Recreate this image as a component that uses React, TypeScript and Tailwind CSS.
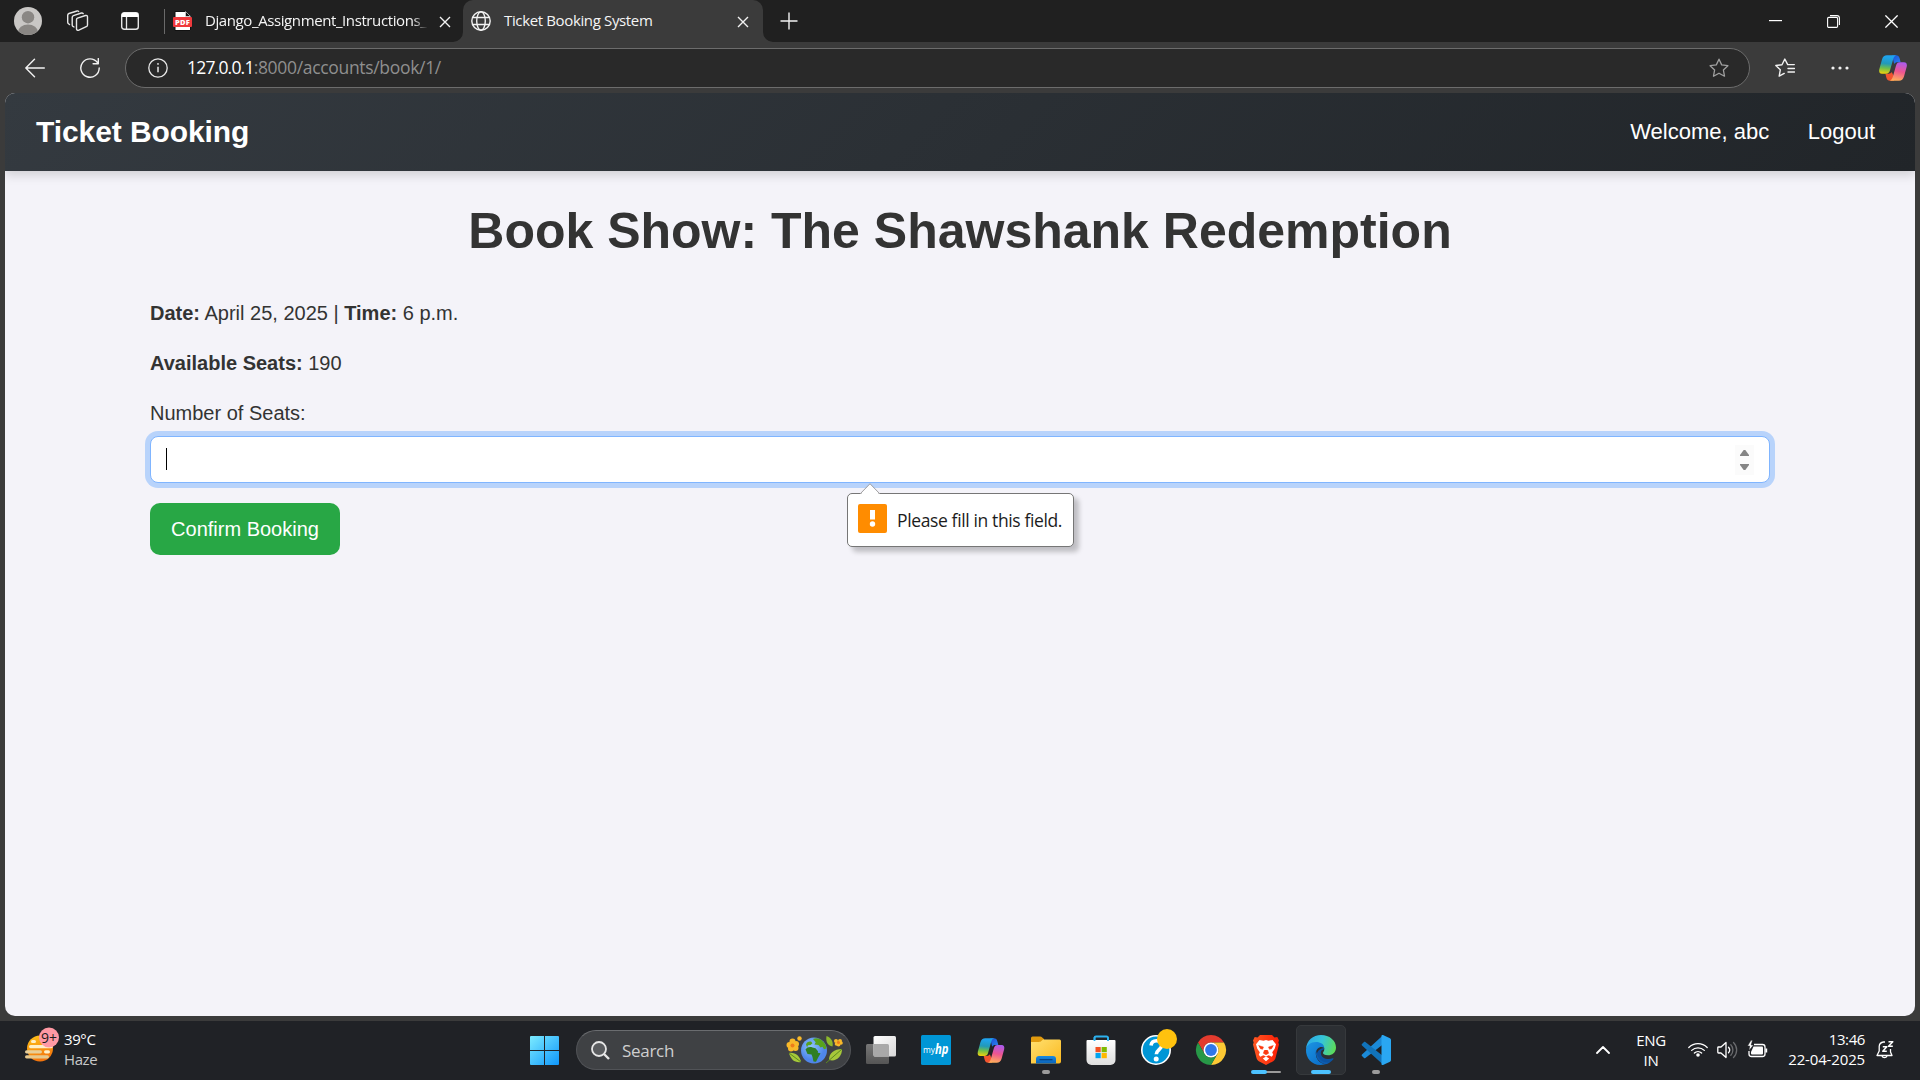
import React from "react";

const UI = "font-['Open_Sans','Noto_Sans',sans-serif]";

function Copilot({ className, id }: { className: string; id: string }) {
  return (
    <svg className={className} viewBox="0 0 28 26" fill="none">
      <defs>
        <linearGradient id={id + "a"} x1="8" y1="0" x2="6" y2="19" gradientUnits="userSpaceOnUse">
          <stop offset="0.1" stopColor="#1fa3ec" />
          <stop offset="0.45" stopColor="#2299b8" />
          <stop offset="0.7" stopColor="#6fbf4a" />
          <stop offset="1" stopColor="#f5d20a" />
        </linearGradient>
        <linearGradient id={id + "b"} x1="22" y1="7" x2="18" y2="26" gradientUnits="userSpaceOnUse">
          <stop offset="0" stopColor="#a95bf0" />
          <stop offset="0.5" stopColor="#ee5590" />
          <stop offset="1" stopColor="#ffb05a" />
        </linearGradient>
        <linearGradient id={id + "c"} x1="14" y1="0" x2="22" y2="8" gradientUnits="userSpaceOnUse">
          <stop offset="0" stopColor="#1b50d8" />
          <stop offset="1" stopColor="#2a84f0" />
        </linearGradient>
      </defs>
      <path d="M13 0.300h4c2 0 3 1 3.600 3l1 4h-3.200c-1.500 0-2.500.5-3.200 1.700L14 4z" fill={"url(#" + id + "c)"} />
      <path d="M15 25.700h-4c-2 0-3-1-3.600-3l-1-4h3.200c1.500 0 2.500-.5 3.200-1.700L15 22z" fill="#f2542f" />
      <path d="M8 0.300h9.500c-1.800.4-2.800 2-3.400 4.200l-3 10.500c-.8 2.700-1.800 3.700-4.100 3.700H3c-2.400 0-3.300-1.800-2.700-4.500L3 4.500C3.800 1.700 5.500.3 8 .3z" fill={"url(#" + id + "a)"} />
      <path d="M20 25.700h-9.500c1.800-.4 2.800-2 3.400-4.200l3-10.500c.8-2.700 1.800-3.700 4.100-3.700H25c2.400 0 3.300 1.800 2.700 4.500L25 21.500c-.8 2.800-2.500 4.200-5 4.200z" fill={"url(#" + id + "b)"} />
    </svg>
  );
}

function CloseIcon({ className }: { className: string }) {
  return (
    <svg className={className} viewBox="0 0 12 12" stroke="#f2f2f2" strokeWidth="1.400">
      <path d="M1 1l10 10M11 1L1 11" />
    </svg>
  );
}

function TabStrip() {
  return (
    <div className="flex h-[42px] items-center bg-[#202020]">
      <svg className="ml-[14px] size-7 shrink-0" viewBox="0 0 28 28">
        <clipPath id="av"><circle cx="14" cy="14" r="14" /></clipPath>
        <g clipPath="url(#av)">
          <rect width="28" height="28" fill="#c9c7c5" />
          <circle cx="14" cy="10.200" r="6.200" fill="#8a8784" />
          <ellipse cx="14" cy="25" rx="10" ry="7.500" fill="#8a8784" />
        </g>
      </svg>
      <svg className="ml-[24px] h-[22px] w-[24px] shrink-0" viewBox="0 0 24 22" fill="none" stroke="#e6e6e6" strokeWidth="1.400" strokeLinejoin="round" strokeLinecap="round">
        <path d="M11.500 8.200l8-2.700c1-.3 2 .3 2 1.400v8c0 .8-.4 1.400-1.200 1.700l-7.500 3.600c-1.200.5-2.300-.2-2.300-1.400v-9c0-.8.3-1.300 1-1.600z" />
        <path d="M8 17l-1-.6c-.6-.4-.8-.8-.8-1.500V7.500c0-.9.4-1.500 1.200-1.800l8-2.700c.8-.2 1.400 0 1.800.6" />
        <path d="M3.500 14.500l-1-.8c-.6-.4-.8-.8-.8-1.500V5.300c0-.9.4-1.500 1.200-1.800l8.200-2.500c.7-.2 1.200 0 1.500.4" />
      </svg>
      <svg className="ml-[31px] size-[18px] shrink-0" viewBox="0 0 18 18" fill="none">
        <rect x="0.700" y="0.700" width="16.600" height="16.600" rx="2.500" stroke="#e6e6e6" strokeWidth="1.400" />
        <path d="M0.700 3a2.300 2.300 0 0 1 2.300-2.300h12A2.300 2.300 0 0 1 17.300 3v2H.7z" fill="#fff" />
        <path d="M5.500 5v12" stroke="#e6e6e6" strokeWidth="1.300" />
      </svg>
      <div className="ml-[25px] h-[25px] w-px shrink-0 bg-[#6a6a6a]" />
      <svg className="ml-[8px] h-[20px] w-[19px] shrink-0" viewBox="0 0 19 20">
        <path d="M2 .5h10.500L17.500 5v14.500H2z" fill="#fff" stroke="#111" strokeWidth="1" />
        <path d="M12.500.5L17.500 5.500h-5z" fill="#111" stroke="#fff" strokeWidth=".5" />
        <rect y="6" width="19" height="10" rx="1" fill="#f0393c" />
        <text x="9.500" y="13.700" textAnchor="middle" fontSize="7.500" fontWeight="800" fontFamily="Open Sans" fill="#fff" letterSpacing=".3">PDF</text>
      </svg>
      <div className="mb-[2px] ml-[13px] w-[223px] shrink-0 overflow-hidden whitespace-nowrap text-[15px] leading-5 tracking-[-0.4px] text-[#f5f5f5] [mask-image:linear-gradient(to_right,#000_93%,transparent)]">Django_Assignment_Instructions_</div>
      <CloseIcon className="ml-[11px] mt-[2px] size-3 shrink-0" />
      <div className="relative ml-[12px] flex h-[42px] w-[300px] shrink-0 items-center rounded-t-[10px] bg-[#3b3b3b]">
        <svg className="absolute -left-[10px] bottom-0 size-[10px]" viewBox="0 0 10 10"><path d="M10 0v10H0A10 10 0 0 0 10 0z" fill="#3b3b3b" /></svg>
        <svg className="absolute -right-[10px] bottom-0 size-[10px]" viewBox="0 0 10 10"><path d="M0 0v10h10A10 10 0 0 1 0 0z" fill="#3b3b3b" /></svg>
        <svg className="ml-[8px] size-[20px]" viewBox="0 0 20 20" fill="none" stroke="#f2f2f2" strokeWidth="1.400">
          <circle cx="10" cy="10" r="9.200" />
          <ellipse cx="10" cy="10" rx="4.300" ry="9.200" />
          <path d="M1.700 6.500h16.600M1.700 13.500h16.600" />
        </svg>
        <span className="mb-[2px] ml-[13px] w-[150px] whitespace-nowrap text-[15px] leading-5 tracking-[-0.36px] text-[#f5f5f5]">Ticket Booking System</span>
        <CloseIcon className="ml-[83px] mt-[2px] size-3" />
      </div>
      <svg className="ml-[17px] size-[18px] shrink-0" viewBox="0 0 18 18" stroke="#f2f2f2" strokeWidth="1.400"><path d="M9 .5v17M.5 9h17" /></svg>
      <div className="ml-auto flex items-center pr-[22px]">
        <svg className="h-[2px] w-[13px]" viewBox="0 0 13 2"><path d="M0 .6h13" stroke="#fff" strokeWidth="1.200" /></svg>
        <svg className="ml-[45px] size-[13px]" viewBox="0 0 13 13" fill="none" stroke="#fff" strokeWidth="1.100">
          <rect x=".6" y="2.400" width="10" height="10" rx="1.200" />
          <path d="M3 .6h7c1.500 0 2.400.9 2.400 2.400v7" />
        </svg>
        <svg className="ml-[45px] size-[13px]" viewBox="0 0 13 13" stroke="#fff" strokeWidth="1.300"><path d="M.4.4l12.200 12.200M12.600.4L.4 12.600" /></svg>
      </div>
    </div>
  );
}

const STAR = "M10 1.200l2.700 5.700 6.200.8-4.500 4.300 1.100 6.200L10 15.200l-5.500 3 1.100-6.200L1.100 7.700l6.200-.8z";

function Toolbar() {
  return (
    <div className="flex h-[51px] items-center bg-[#3b3b3b]">
      <svg className="ml-[25px] size-5" viewBox="0 0 20 20" fill="none" stroke="#f2f2f2" strokeWidth="1.400" strokeLinecap="round" strokeLinejoin="round"><path d="M19.300 10H.8M9.500 1.300L.8 10l8.700 8.700" /></svg>
      <svg className="ml-[35px] size-5" viewBox="0 0 20 20" fill="none" stroke="#f2f2f2" strokeWidth="1.400" strokeLinecap="round" strokeLinejoin="round"><path d="M19.200 10a9.200 9.200 0 1 1-1.700-5.300M18.300.6v5.200h-5.200" /></svg>
      <div className="ml-[25px] flex h-10 w-[1625px] items-center rounded-full border border-[#6c6c6c] bg-[#292929]">
        <svg className="ml-[22px] size-5" viewBox="0 0 20 20" fill="none" stroke="#e8e8e8" strokeWidth="1.300"><circle cx="10" cy="10" r="9.200" /><path d="M10 8.700v5.500" strokeWidth="1.500" /><circle cx="10" cy="5.900" r=".9" fill="#e8e8e8" stroke="none" /></svg>
        <span className="mb-[2px] ml-[19px] whitespace-nowrap text-[17.500px] leading-6 text-[#8f8f8f]"><span className="tracking-[-0.8px] text-white">127.0.0.1</span><span className="tracking-[-0.32px]">:8000/accounts/book/1/</span></span>
        <svg className="ml-auto mr-[20px] size-5" viewBox="0 0 20 20" fill="none" stroke="#a0a0a0" strokeWidth="1.300" strokeLinejoin="round"><path d={STAR} /></svg>
      </div>
      <svg className="ml-[25px] size-5" viewBox="0 0 20 20" fill="none" stroke="#f2f2f2" strokeWidth="1.400" strokeLinejoin="round" strokeLinecap="round">
        <path d="M19.300 6.600h-6.600L9.800 1 7 6.700l-6.200.8 4.500 4.300-1.100 6.300 5-2.700M13 10.500h6.500M13 14h6.500" />
      </svg>
      <svg className="ml-[36px] h-[4px] w-[18px]" viewBox="0 0 18 4" fill="#f2f2f2"><circle cx="2" cy="2" r="1.600" /><circle cx="9" cy="2" r="1.600" /><circle cx="16" cy="2" r="1.600" /></svg>
      <Copilot className="ml-[30px] h-[26px] w-[28px]" id="tb" />
    </div>
  );
}

function BookingPage() {
  return (
    <div className="relative mx-[5px] h-[923px] overflow-hidden rounded-[10px] bg-[#f4f3f9] font-['Liberation_Sans',Arial,sans-serif] text-[#333]">
      <nav className="flex h-[78px] items-center justify-between bg-[linear-gradient(135deg,#343a40,#212529)] pl-[31px] pr-[40px] text-white shadow-[0_4px_10px_rgba(0,0,0,0.15)]">
        <span className="text-[30px] font-bold leading-9 tracking-[-0.08px]">Ticket Booking</span>
        <div className="flex gap-[38.500px] text-[22px] leading-7">
          <span>Welcome, abc</span>
          <span>Logout</span>
        </div>
      </nav>
      <main className="mx-auto w-[1620px] pt-[30px]">
        <h1 className="text-center text-[50px] font-bold leading-[60px]">Book Show: The Shawshank Redemption</h1>
        <p className="mt-[37px] text-[20px] leading-[30px]"><b>Date:</b> April 25, 2025 | <b>Time:</b> 6 p.m.</p>
        <p className="mt-5 text-[20px] leading-[30px]"><b>Available Seats:</b> 190</p>
        <label className="mt-5 block text-[20px] leading-[30px]">Number of Seats:</label>
        <div className="relative mt-[8px] flex h-[47px] items-center rounded-[8px] border border-[#80b5ff] bg-white shadow-[0_0_0_5px_#b8d3fb]">
          <div className="mb-[1px] ml-[15px] h-[22px] w-px bg-black" />
          <div className="ml-auto mr-[15px] flex h-[30px] w-[19px] flex-col items-center justify-between bg-[#fbfbfb] py-[5px]">
            <svg className="h-[6px] w-[9px]" viewBox="0 0 9 6"><path d="M3.700 0h1.600L9 5v1H0V5z" fill="#858585" /></svg>
            <svg className="h-[6px] w-[9px]" viewBox="0 0 9 6"><path d="M3.700 6h1.600L9 1V0H0v1z" fill="#858585" /></svg>
          </div>
          <div className={"absolute left-[696px] top-[56px] flex h-[54px] w-[227px] items-center rounded-[5px] border border-[#767676] bg-white shadow-[5px_5px_5px_rgba(0,0,0,0.22)] " + UI}>
            <svg className="absolute -top-[11px] left-[12px] h-[12px] w-[20px]" viewBox="0 0 20 12"><path d="M0 12L10 1l10 11z" fill="#fff" /><path d="M0 11L10 .7 20 11" fill="none" stroke="#a0a0a0" /></svg>
            <svg className="-mt-[3px] ml-[10px] size-[29px]" viewBox="0 0 29 29"><rect width="29" height="29" rx="2" fill="#ff8c00" /><rect x="12" y="6" width="5" height="9.500" fill="#fff" /><circle cx="14.500" cy="20" r="2.700" fill="#fff" /></svg>
            <span className="ml-[10px] whitespace-nowrap text-[17.500px] leading-6 tracking-[-0.37px] text-[#1c1c1c]">Please fill in this field.</span>
          </div>
        </div>
        <button className="mt-[20px] h-[52px] w-[190px] rounded-[10px] bg-[#28a745] text-[20px] text-white">Confirm Booking</button>
      </main>
    </div>
  );
}

function Tile({ children, active, bar }: { children: React.ReactNode; active?: boolean; bar?: React.ReactNode }) {
  return (
    <svg className={active ? "size-[50px] rounded-[5px] border border-[#36393c] bg-[#2c2f33]" : "size-[50px]"} viewBox={active ? "1 1 48 48" : "0 0 50 50"}>
      {children}
      {bar}
    </svg>
  );
}

const dot = <rect x="21" y="45" width="8" height="4" rx="2" fill="#9b9b9b" />;

function Apps() {
  return (
    <div className="ml-[5px] flex gap-[5px]">
      <Tile>
        <defs>
          <linearGradient id="tvw" x2="1" y2="1"><stop stopColor="#fff" /><stop offset="1" stopColor="#d8d8d8" /></linearGradient>
          <linearGradient id="tvg" x2="0" y2="1"><stop stopColor="#777" /><stop offset="1" stopColor="#555" /></linearGradient>
        </defs>
        <rect x="10" y="19" width="23" height="20" rx="1.500" fill="url(#tvg)" />
        <rect x="17.500" y="11" width="22.500" height="20.500" rx="1.500" fill="url(#tvw)" />
        <path d="M17.500 19H31.500a1.500 1.500 0 0 1 1.500 1.500v11H19a1.500 1.500 0 0 1-1.500-1.500z" fill="#a9a9a9" />
      </Tile>
      <Tile>
        <rect x="10" y="10" width="30" height="30" rx="1.500" fill="#0096d6" />
        <text x="12" y="28" fontSize="9.500" fontFamily="Open Sans" fontWeight="500" fill="#fff" textLength="12" lengthAdjust="spacingAndGlyphs">my</text>
        <text x="24" y="28.500" fontSize="15" fontFamily="Open Sans" fontStyle="italic" fontWeight="700" fill="#fff" textLength="13.500" lengthAdjust="spacingAndGlyphs">hp</text>
      </Tile>
      <div className="flex size-[50px] items-center justify-center"><Copilot className="h-[25px] w-[28px]" id="tk" /></div>
      <Tile bar={dot}>
        <defs>
          <linearGradient id="fo" x2="1" y2="1"><stop stopColor="#ffe070" /><stop offset="1" stopColor="#fbb91f" /></linearGradient>
          <linearGradient id="fb" x2="0" y2="1"><stop stopColor="#1a8ae0" /><stop offset="1" stopColor="#0a62b8" /></linearGradient>
        </defs>
        <path d="M10 13a1.500 1.500 0 0 1 1.500-1.500h7.500c1 0 1.600.3 2.200.9L23 14v6H10z" fill="#e09a0e" />
        <path d="M10 17h8c1 0 1.600-.2 2.300-.9L22 14.500h16.500A1.500 1.500 0 0 1 40 16v20.500a2 2 0 0 1-2 2H10z" fill="url(#fo)" />
        <path d="M15 38.500V34a3 3 0 0 1 3-3h14a3 3 0 0 1 3 3v4.500z" fill="url(#fb)" />
        <path d="M18.500 34.700h13" stroke="#073f7f" strokeWidth="1.200" />
      </Tile>
      <Tile>
        <defs><linearGradient id="st" x2="0" y2="1"><stop stopColor="#fff" /><stop offset="1" stopColor="#dedede" /></linearGradient></defs>
        <path d="M18.500 18v-5a1.500 1.500 0 0 1 1.500-1.500h10.500a1.500 1.500 0 0 1 1.500 1.500v5" fill="none" stroke="#2cb1ee" strokeWidth="1.800" />
        <path d="M11.500 15h27a1 1 0 0 1 1 1v19a5 5 0 0 1-5 5h-19a5 5 0 0 1-5-5V16a1 1 0 0 1 1-1z" fill="url(#st)" />
        <path d="M18.500 12v4M32 12v4" stroke="#2cb1ee" strokeWidth="1.800" />
        <rect x="19.500" y="22" width="5.200" height="5.200" fill="#f25022" /><rect x="25.600" y="22" width="5.200" height="5.200" fill="#7fba00" />
        <rect x="19.500" y="28" width="5.200" height="5.200" fill="#00a4ef" /><rect x="25.600" y="28" width="5.200" height="5.200" fill="#ffb900" />
      </Tile>
      <Tile>
        <circle cx="25" cy="25" r="14.200" fill="#0096d6" stroke="#fff" strokeWidth="1.600" />
        <path d="M20 20.500c.5-3.200 2.700-4.700 5.500-4.700 3.200 0 5.200 1.700 5.200 4.400 0 4.300-5.400 4.400-5.400 9" fill="none" stroke="#fff" strokeWidth="3.600" />
        <circle cx="25.200" cy="34" r="2.500" fill="#fff" />
        <circle cx="36" cy="14" r="10" fill="#ffc20e" />
      </Tile>
      <Tile>
        <path d="M12 17.500A15 15 0 0 1 38 17.500H25a7.500 7.500 0 0 0-6.500 11.200z" fill="#e33b2e" />
        <path d="M38 17.500A15 15 0 0 1 25 40l6.500-11.300A7.500 7.500 0 0 0 25 17.500z" fill="#fcc934" />
        <path d="M12 17.500A15 15 0 0 0 25 40l6.500-11.300a7.500 7.500 0 0 1-13 0z" fill="#279847" />
        <circle cx="25" cy="25" r="7.500" fill="#fff" /><circle cx="25" cy="25" r="5.900" fill="#2f77ea" />
      </Tile>
      <Tile bar={<><rect x="12" y="46" width="28" height="2" rx="1" fill="#9b9b9b" /><rect x="10" y="45" width="16" height="4" rx="2" fill="#4cc2ff" /></>}>
        <defs><linearGradient id="br" x2="1" y2="0"><stop stopColor="#ff5722" /><stop offset="1" stopColor="#fb1f06" /></linearGradient></defs>
        <path d="M19 10h12l2.500 2.500 2.800-.5 1.700 3.500-.7 2 .7 2-3.500 13.500c-.5 1.600-1 2.300-2.300 3.200L25 40l-7.200-3.800c-1.300-.9-1.800-1.600-2.300-3.200L12 19.500l.7-2-.7-2 1.700-3.500 2.800.5z" fill="url(#br)" />
        <path d="M18.500 15l4 .8 2.500-.8 2.500.8 4-.8 3.500 4.200-1.300 4.500-2.500 3.500 1 2.500-1.500 2-3-1.500-2.700 1.200 3.200 2-3.200 2.800-3.200-2.800 3.200-2-2.700-1.200-3 1.500-1.500-2 1-2.500-2.500-3.500-1.300-4.500z" fill="#fff" />
        <path d="M17.500 20.500l5 1.500-1 2.300-2.500-.8M32.500 20.500l-5 1.500 1 2.300 2.500-.8M23.500 25l-1.200 3.200L25 29.800l2.700-1.600-1.200-3.200" fill="#fb3a10" stroke="#fb3a10" strokeWidth=".5" />
      </Tile>
      <Tile active bar={<rect x="15" y="45" width="20" height="4" rx="2" fill="#4cc2ff" />}>
        <defs>
          <linearGradient id="e1" x1="10" y1="14" x2="40" y2="24" gradientUnits="userSpaceOnUse"><stop stopColor="#2aa8e8" /><stop offset=".5" stopColor="#36c5d8" /><stop offset="1" stopColor="#5fdc50" /></linearGradient>
          <linearGradient id="e2" x1="10" y1="22" x2="28" y2="40" gradientUnits="userSpaceOnUse"><stop stopColor="#1a90e0" /><stop offset="1" stopColor="#0a6cc8" /></linearGradient>
        </defs>
        <path d="M10 24C10.500 15.500 17 10 25 10c8.500 0 15 5.500 15 12.500 0 5-3.800 7.800-8 7.800-3.500 0-5-1.200-5-2.200 0-1 1.300-1.600 1.300-4 0-3.200-3.300-6-8-6-4.800 0-8.800 2.400-10.300 5.900z" fill="url(#e1)" />
        <path d="M10 24.800C10.300 20.500 14.500 17 20 17c4.500 0 8 2.200 8.300 5.700-3.800-2.200-8.500.5-8.500 6 0 5 4 9.800 9.500 10.600C18 42.500 9.600 34.500 10 24.800z" fill="url(#e2)" />
        <path d="M28.200 23c-3.500.3-7.500 2.700-7.500 7.200 0 5 5 8.300 10.300 8.300 2.300-.7 4.600-2.200 6.300-4.300 .5-.7 0-1.200-.7-.9-4.700 2-11.800.2-11.800-5.600 0-2 1.500-3.200 3.200-3.500z" fill="#0b53a3" />
        <path d="M20 25c-1 6 2 12.500 9.500 14.300 1.500-.3 3.200-1 4.500-2-6 1-12-1.500-14-12.300z" fill="#0d5cb0" />
      </Tile>
      <Tile bar={dot}>
        <path d="M32 10l-.8 1L11 29.500a1 1 0 0 0 0 1.500l2 2c.4.400 1 .4 1.400 0L32.500 19z" fill="#1b8ad8" />
        <path d="M14.400 17c-.4-.4-1-.4-1.400 0l-2 2a1 1 0 0 0 0 1.500L32 39.500V31z" fill="#1173ba" />
        <path d="M32 10l7 3.300c.6.300 1 .9 1 1.600v20.200c0 .7-.4 1.300-1 1.600L32 40c-1 .2-1.500-.3-1.500-1V11c0-.7.500-1.200 1.500-1z" fill="#2aa7f2" />
      </Tile>
    </div>
  );
}

function Taskbar() {
  return (
    <div className={"flex h-[59px] items-start bg-[#202226] pt-1 text-white " + UI}>
      <svg className="ml-[24px] mt-[1px] h-[37px] w-[36px] shrink-0" viewBox="0 0 36 37">
        <defs><linearGradient id="sun" x2="0.300" y2="1"><stop stopColor="#ffc61a" /><stop offset="1" stopColor="#f4750c" /></linearGradient></defs>
        <circle cx="16" cy="22.500" r="13" fill="url(#sun)" />
        <g fill="#fff0c8"><rect x="7" y="14" width="5" height="3" rx="1.500" /><rect x="5" y="19" width="24" height="3.200" rx="1.600" /><rect x="1" y="24.200" width="17" height="3.200" rx="1.600" fill="#e8cf98" /><rect x="20" y="24.200" width="6" height="3.200" rx="1.600" /><rect x="1" y="29.200" width="24" height="3.200" rx="1.600" fill="#e8c98c" /></g>
        <circle cx="25" cy="11.500" r="10" fill="#ff99a4" />
        <text x="25" y="16.500" textAnchor="middle" fontSize="14" fontFamily="Open Sans" fill="#1c1c1c">9+</text>
      </svg>
      <div className="ml-[4px] mt-[4px] w-[60px] text-[15px] leading-5 tracking-[-0.4px]"><div>39°C</div><div className="text-[#c8c9ca]">Haze</div></div>
      <svg className="ml-[406px] mt-[11px] size-[29px] shrink-0" viewBox="0 0 29 29">
        <defs><linearGradient id="win" x2="1" y2="1"><stop stopColor="#7cebff" /><stop offset="1" stopColor="#0f97fb" /></linearGradient></defs>
        <path d="M1 0h13v14H0V1a1 1 0 0 1 1-1zM15 0h13a1 1 0 0 1 1 1v13H15zM0 15h14v14H1a1 1 0 0 1-1-1zM15 15h14v13a1 1 0 0 1-1 1H15z" fill="url(#win)" />
      </svg>
      <div className="ml-[17px] mt-[5px] flex h-10 w-[275px] shrink-0 items-center rounded-full border border-[#515357] border-t-[#6a6c6f] bg-[#3f4144]">
        <svg className="ml-[14px] size-[19px]" viewBox="0 0 19 19" fill="none" stroke="#e6e6e6"><circle cx="8" cy="8" r="7" strokeWidth="1.800" fill="#5a5c5f" /><path d="M13 13l5 5" strokeWidth="2.400" /></svg>
        <span className="ml-[12px] mt-[2px] text-[17px] leading-6 tracking-[-0.3px] text-[#cfcfcf]">Search</span>
        <svg className="ml-auto mr-[7px] h-[28px] w-[57px]" viewBox="0 0 57 28">
          <defs><radialGradient id="ea" cx=".4" cy=".35"><stop stopColor="#8fc4fa" /><stop offset="1" stopColor="#4f86ea" /></radialGradient></defs>
          <g fill="#f9b92a"><circle cx="6.500" cy="5.500" r="3" /><circle cx="3.500" cy="9" r="3" /><circle cx="10" cy="8" r="3" /><circle cx="5" cy="12.500" r="3" /><circle cx="9.500" cy="12" r="3" /><circle cx="13.500" cy="2.500" r="2.200" /><circle cx="50" cy="5" r="2" /><circle cx="54" cy="5" r="2" /><circle cx="52.500" cy="8.500" r="2" /><circle cx="55" cy="7" r="1.800" /><circle cx="50.500" cy="8" r="1.800" /></g>
          <circle cx="6.500" cy="9.500" r="2" fill="#ef7d1a" /><circle cx="52.500" cy="6.500" r="1.500" fill="#ef7d1a" />
          <path d="M3 17c6-1 11 3 12 9-6 1-10-2-12-9z" fill="#a6c83a" /><path d="M3 17l12 9" stroke="#5c8a1e" />
          <path d="M40.500 0c5 2 7 6 6 10.500-5-1-7-5-6-10.500z" fill="#8db82c" />
          <path d="M56 13c-8 0-13 4-13 11 7 2 13-3 13-11z" fill="#a6c83a" /><path d="M56 13L40 27" stroke="#5c8a1e" />
          <circle cx="28" cy="14.500" r="13" fill="url(#ea)" />
          <path d="M20 8.500c.500-2.500 3-3.500 5-3l1.500 1.800-2 1.700-2.500.3-1 2zM27 3c4-1.800 8-.2 11 3.500 1.500 2 2.300 4 2.500 6l-2.500.8-1.500-2.500-2 .8-2-2.600-4-.6 1.200-2.200z" fill="#58a21c" />
          <path d="M19.500 13.500c1.500-2.300 4.500-3 7-2l3 .8 2.500 3-.2 1.500 2.700.5c-.5 2-2 3-2.700 5l-1.800 3.500-2.500-.3-1-4.500-1-2.500-4-.5z" fill="#2f7f22" />
        </svg>
      </div>
      <Apps />
      <svg className="ml-[195px] mt-[21px] h-[8px] w-[14px]" viewBox="0 0 14 8" fill="none" stroke="#fff" strokeWidth="1.800" strokeLinecap="round" strokeLinejoin="round"><path d="M1 7l6-6 6 6" /></svg>
      <div className="ml-[21px] mt-[5px] w-[40px] text-center text-[15px] leading-5 tracking-[-0.3px]"><div>ENG</div><div>IN</div></div>
      <svg className="ml-[17px] mt-[17px] h-[15px] w-[20px]" viewBox="0 0 20 15" fill="none" stroke="#fff" strokeWidth="1.300" strokeLinecap="round">
        <path d="M.8 5.500a13 13 0 0 1 18.400 0M3.700 8.400a9 9 0 0 1 12.600 0M6.400 11a5.200 5.200 0 0 1 7.200 0" /><circle cx="10" cy="13" r="1.800" fill="#fff" stroke="none" />
      </svg>
      <svg className="ml-[9px] mt-[16px] h-[18px] w-[21px]" viewBox="0 0 21 18" fill="none" stroke="#fff" strokeWidth="1.300" strokeLinecap="round" strokeLinejoin="round">
        <path d="M1 6h3l5-4.500v15L4 12H1.500a.7.700 0 0 1-.7-.7V6.500zM11.500 6.300a4 4 0 0 1 0 5.400" /><path d="M13.800 3.800a7.500 7.500 0 0 1 0 10.400M16.500 1.500a10.500 10.500 0 0 1 0 15" stroke="#6a6b6e" />
      </svg>
      <svg className="ml-[9px] mt-[15px] h-[18px] w-[21px]" viewBox="0 0 21 18" fill="none" stroke="#fff" strokeWidth="1.300">
        <path d="M7 4.500h8.500a2.500 2.500 0 0 1 2.500 2.500v7a2.500 2.500 0 0 1-2.500 2.500h-11A2.500 2.500 0 0 1 2 14v-3" />
        <path d="M6.500 6.500h8.500a1 1 0 0 1 1 1v6a1 1 0 0 1-1 1H5a1 1 0 0 1-1-1v-1.500z" fill="#fff" stroke="none" /><path d="M19.300 8.500v4" strokeWidth="1.800" />
        <path d="M4 .2L.5 6h2.200L2 10.500 6.500 5H4.200L5.500.2z" fill="#fff" stroke="#202226" strokeWidth=".5" />
      </svg>
      <div className="ml-[17px] mt-[4px] w-[80px] whitespace-nowrap text-right text-[15px] leading-5"><div className="tracking-[-0.4px]">13:46</div><div className="tracking-[-0.15px]">22-04-2025</div></div>
      <svg className="ml-[11px] mt-[15px] h-[20px] w-[19px]" viewBox="0 0 19 20" fill="none" stroke="#fff" strokeWidth="1.300" strokeLinejoin="round">
        <path d="M9 2H7.500A4.800 4.800 0 0 0 3.200 6.500V11L1 15.500h15L14.500 12V9" /><path d="M6 16a2.700 2.700 0 0 0 5 0" /><path d="M6.800 6.800h4l-4 4.400h4M12.500 1.700h4.300l-4.300 4.500h4.300" strokeWidth="1.500" />
      </svg>
    </div>
  );
}

export default function App() {
  return (
    <div className={"h-[1080px] w-[1920px] overflow-hidden bg-[#3b3b3b] " + UI}>
      <TabStrip />
      <Toolbar />
      <BookingPage />
      <div className="h-[5px]" />
      <Taskbar />
    </div>
  );
}
